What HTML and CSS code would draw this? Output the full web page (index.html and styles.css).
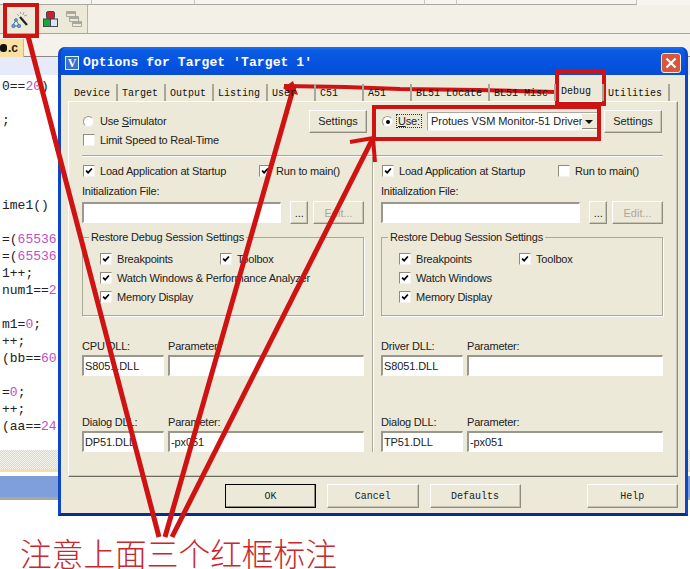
FILE: index.html
```html
<!DOCTYPE html>
<html lang="zh">
<head>
<meta charset="utf-8">
<title>Options for Target</title>
<link rel="stylesheet" href="styles.css">
</head>
<body>
<svg class="defs" width="0" height="0" aria-hidden="true">
  <symbol id="check" viewBox="0 0 12 12"><path d="M2.5 5.500 5 8l4.500-5" fill="none" stroke="#000" stroke-width="2"/></symbol>
</svg>
<div class="app">
  <div class="menu-strip">
    <span class="seg seg-a"></span><span class="seg seg-b"></span><span class="seg seg-c"></span><span class="seg seg-d"></span><span class="seg seg-e"></span>
  </div>
  <div class="toolbar-row">
    <div class="toolbar">
      <svg class="tool tool-wand" viewBox="0 0 18 18" width="18" height="18">
        <path d="M9 6l7 8" stroke="#222" stroke-width="2.200" fill="none"/>
        <path d="M9 1l1 2M13 1l-1 3M16 4l-3 1M6 3l2 2" stroke="#b9a" stroke-width="1" fill="none"/>
        <path d="M5 9 2 14M5 9l3 5M2 15h6" stroke="#4a7ab8" stroke-width="1" fill="none"/>
        <circle cx="5" cy="9" r="1.500" fill="#6c9ad0" stroke="#2d62a8" stroke-width=".6"/><circle cx="2.400" cy="15" r="1.700" fill="#6c9ad0" stroke="#2d62a8" stroke-width=".6"/><circle cx="8" cy="15" r="1.700" fill="#6c9ad0" stroke="#2d62a8" stroke-width=".6"/>
      </svg>
      <svg class="tool tool-boxes" viewBox="0 0 15 16" width="15" height="16">
        <rect x="3.500" y="0.500" width="8" height="7.500" rx="1.500" fill="#c8202c" stroke="#445"/>
        <rect x="0.500" y="8" width="7" height="7.500" fill="#19a838" stroke="#445"/>
        <rect x="7.500" y="8" width="7" height="7.500" fill="#d8e2f2" stroke="#445"/>
      </svg>
      <svg class="tool tool-windows" viewBox="0 0 16 16" width="16" height="16">
        <path d="M.5.5h9v5h-9zM3.500 5.500h9v5h-9zM6.500 10.500h9v5h-9z" fill="#ece9d8" stroke="#a8a8a0"/>
        <path d="M.5 2h9M3.500 7h9M6.500 12h9" stroke="#a8a8a0" stroke-width="2"/>
      </svg>
    </div>
  </div>
  <div class="file-row"><span class="file-tab"><b class="file-dot"></b>.c</span></div>
  <pre class="code"><span class="hl">0==<i>20</i>)</span>

;




ime1()

=(<i>65536</i>
=(<i>65536</i>
1++;
num1==<i>2</i>

m1=<i>0</i>;
++;
(bb==<i>60</i>

=<i>0</i>;
++;
(aa==<i>24</i></pre>
  <div class="hatch"></div>
  <div class="output-gap"></div>
  <div class="statusbar"></div>
  <p class="note">注意上面三个红框标注</p>
</div>

<section class="window">
  <header class="titlebar">
    <span class="app-icon">V</span>
    <h1 class="title">Options for Target 'Target 1'</h1>
    <span class="close"><svg viewBox="0 0 12 12" width="12" height="12"><path d="M1.500 1.500l9 9M10.500 1.500l-9 9" stroke="#fff" stroke-width="2.200"/></svg></span>
  </header>
  <div class="client">
    <nav class="tabs">
      <span class="tab">Device</span><span class="tab">Target</span><span class="tab">Output</span><span class="tab">Listing</span><span class="tab">User</span><span class="tab">C51</span><span class="tab">A51</span><span class="tab">BL51 Locate</span><span class="tab">BL51 Misc</span><span class="tab tab-active">Debug</span><span class="tab">Utilities</span>
    </nav>
    <div class="sheet">
      <div class="columns top">
        <div class="col">
          <div class="row between">
            <label class="opt"><span class="radio"></span><span>Use <u>S</u>imulator</span></label>
            <button class="btn btn-settings">Settings</button>
          </div>
          <label class="opt limit"><span class="cb"></span><span>Limit Speed to Real-Time</span></label>
        </div>
        <div class="col">
          <div class="row">
            <label class="opt opt-use"><span class="radio on"></span><span class="focus"><u>U</u>se:</span></label>
            <div class="combo"><span>Protues VSM Monitor-51 Driver</span><span class="combo-arrow"></span></div>
            <button class="btn btn-settings btn-driver">Settings</button>
          </div>
        </div>
      </div>
      <hr class="rule">
      <div class="columns panels">
        <div class="col col-left">
          <div class="load-row">
            <label class="opt"><span class="cb"><svg class="tick"><use href="#check"/></svg></span><span>Load Application at Startup</span></label>
            <label class="opt run"><span class="cb"><svg class="tick"><use href="#check"/></svg></span><span>Run to main()</span></label>
          </div>
          <div class="label init-label">Initialization File:</div>
          <div class="file-line">
            <span class="field field-init"></span>
            <button class="btn btn-dots">...</button>
            <button class="btn btn-edit" disabled>Edit...</button>
          </div>
          <fieldset class="group">
            <legend>Restore Debug Session Settings</legend>
            <div class="group-row">
              <label class="opt"><span class="cb"><svg class="tick"><use href="#check"/></svg></span><span>Breakpoints</span></label>
              <label class="opt toolbox"><span class="cb"><svg class="tick"><use href="#check"/></svg></span><span>Toolbox</span></label>
            </div>
            <label class="opt g2"><span class="cb"><svg class="tick"><use href="#check"/></svg></span><span>Watch Windows &amp; Performance Analyzer</span></label>
            <label class="opt g3"><span class="cb"><svg class="tick"><use href="#check"/></svg></span><span>Memory Display</span></label>
          </fieldset>
          <div class="dll dll-first">
            <div class="dll-name"><div class="label">CPU DLL:</div><span class="field">S8051.DLL</span></div>
            <div class="dll-param"><div class="label">Parameter:</div><span class="field"></span></div>
          </div>
          <div class="dll dll-second">
            <div class="dll-name"><div class="label">Dialog DLL:</div><span class="field">DP51.DLL</span></div>
            <div class="dll-param"><div class="label">Parameter:</div><span class="field">-px051</span></div>
          </div>
        </div>
        <div class="col">
          <div class="load-row">
            <label class="opt"><span class="cb"><svg class="tick"><use href="#check"/></svg></span><span>Load Application at Startup</span></label>
            <label class="opt run"><span class="cb"></span><span>Run to main()</span></label>
          </div>
          <div class="label init-label">Initialization File:</div>
          <div class="file-line">
            <span class="field field-init"></span>
            <button class="btn btn-dots">...</button>
            <button class="btn btn-edit" disabled>Edit...</button>
          </div>
          <fieldset class="group">
            <legend>Restore Debug Session Settings</legend>
            <div class="group-row">
              <label class="opt"><span class="cb"><svg class="tick"><use href="#check"/></svg></span><span>Breakpoints</span></label>
              <label class="opt toolbox"><span class="cb"><svg class="tick"><use href="#check"/></svg></span><span>Toolbox</span></label>
            </div>
            <label class="opt g2"><span class="cb"><svg class="tick"><use href="#check"/></svg></span><span>Watch Windows</span></label>
            <label class="opt g3"><span class="cb"><svg class="tick"><use href="#check"/></svg></span><span>Memory Display</span></label>
          </fieldset>
          <div class="dll dll-first">
            <div class="dll-name"><div class="label">Driver DLL:</div><span class="field">S8051.DLL</span></div>
            <div class="dll-param"><div class="label">Parameter:</div><span class="field"></span></div>
          </div>
          <div class="dll dll-second">
            <div class="dll-name"><div class="label">Dialog DLL:</div><span class="field">TP51.DLL</span></div>
            <div class="dll-param"><div class="label">Parameter:</div><span class="field">-px051</span></div>
          </div>
        </div>
      </div>
    </div>
    <footer class="actions">
      <button class="btn act act-default">OK</button>
      <button class="btn act">Cancel</button>
      <button class="btn act">Defaults</button>
      <button class="btn act act-help">Help</button>
    </footer>
  </div>
</section>

<svg class="marks" viewBox="0 0 690 569" width="690" height="569" aria-hidden="true">
  <g fill="none" stroke="#cf1212" stroke-linejoin="miter">
    <rect x="5" y="5" width="32" height="31" stroke-width="4"/>
    <rect x="557" y="72" width="47" height="32" stroke-width="4"/>
    <rect x="374" y="107" width="225" height="32" stroke-width="4"/>
    <path d="M28 36 159 537" stroke-width="5"/>
    <path d="M294 86 165 537" stroke-width="5"/>
    <path d="M372 140 172 537" stroke-width="5"/>
    <path d="M284 86 345 87 400 89 478 90 556 92" stroke-width="4"/>
    <path d="M350 142 373 138 375 162" stroke-width="4"/>
  </g>
  <path d="M293 81 283 88 288 92 298 95Z" fill="#cf1212"/>
</svg>
</body>
</html>
```
FILE: styles.css
```css
* { box-sizing: border-box; }
html, body { margin: 0; padding: 0; }
body { width: 690px; height: 569px; overflow: hidden; position: relative; background: #fff; font-family: "Liberation Sans", Arial, sans-serif; font-size: 11px; color: #222; }
.defs { position: absolute; }

/* background application */
.app { display: flex; flex-direction: column; height: 569px; }
.menu-strip { display: flex; height: 5px; background: #f6f4ee; }
.seg { display: block; height: 5px; border-bottom: 1px solid #a9a89e; border-right: 1px solid #c6c4b8; }
.seg-a { width: 92px; }
.seg-b { width: 103px; }
.seg-c { width: 230px; }
.seg-d { width: 32px; }
.seg-e { width: 180px; }
.toolbar-row { height: 29px; background: #f2f0e7; border-bottom: 1px solid #a8a79c; }
.toolbar { width: 88px; height: 28px; background: #ece9d8; border-right: 1px solid #b4b3a8; display: flex; align-items: flex-start; padding: 6px 0 0 11px; }
.tool { display: block; flex: none; }
.tool-boxes { margin-left: 14px; }
.tool-windows { margin-left: 8px; }
.file-row { height: 23px; background: #f4f2ea; padding-top: 5px; border-bottom: 1px solid #8a897f; }
.file-tab { display: flex; align-items: center; width: 24px; height: 18px; background: #fbe0a4; border-right: 1px solid #c9b98c; font: 700 12px "Liberation Sans", sans-serif; color: #222; }
.file-dot { display: block; width: 7px; height: 8px; background: #111; border-radius: 3px; margin-right: 1px; }
.code { margin: 0; height: 393px; padding: 21px 0 0 2px; background: linear-gradient(#e7eaf8 0 18px, #fff 18px); font: 13px/17px "Liberation Mono", monospace; color: #222; overflow: hidden; }
.code i { font-style: normal; color: #c04fc0; }
.hatch { height: 19px; background: repeating-conic-gradient(#d8d8cc 0 25%, #f4f4ec 0 50%) 0 0 / 2px 2px; }
.output-gap { height: 7px; background: #fff; border-top: 3px solid #f3dfa8; }
.statusbar { height: 24px; background: #7e9fdc; border-bottom: 3px solid #a9a89e; }
.note { margin: 36px 0 0; padding-left: 20px; font: 300 31.700px/32px "Noto Sans CJK SC", sans-serif; color: #c8282c; white-space: nowrap; }

/* dialog window */
.window { position: absolute; left: 58px; top: 47px; width: 630px; height: 469px; background: #0f50d8; border-radius: 7px 7px 0 0; border: solid #0d47c8; border-width: 0 3px 3px 3px; border-bottom-color: #0a2c8c; display: flex; flex-direction: column; }
.titlebar { height: 28px; display: flex; align-items: center; padding: 3px 4px 0 4px; background: linear-gradient(#1a72f0 0, #0a5ae4 4px, #0450dc 22px, #0a4ed0 100%); border-radius: 7px 7px 0 0; flex: none; color: #fff; }
.app-icon { width: 14px; height: 14px; background: #3b6fd0; border: 1px solid #cfe; color: #fff; font: 700 12px/12px "Liberation Serif", serif; text-align: center; flex: none; }
.title { flex: 1; margin: 0 0 0 4px; font: 700 13px/16px "Liberation Mono", monospace; letter-spacing: .1px; color: #fff; white-space: pre; }
.close { width: 20px; height: 20px; border: 1px solid #f0e8e0; border-radius: 3px; background: #d8563a; display: flex; align-items: center; justify-content: center; flex: none; }
.client { flex: 1; background: #ece9d8; padding: 9px 7px 0; display: flex; flex-direction: column; min-height: 0; }
.tabs { display: flex; height: 17px; padding-left: 2px; flex: none; position: relative; z-index: 1; }
.tab { min-width: 48px; height: 17px; padding: 3px 6px 0 4px; font: 10px/13px "Liberation Mono", monospace; color: #111; border-right: 2px solid #a9a79a; white-space: pre; }
.tab-active { padding: 1px 6px 0 5px; }
.sheet { height: 376px; border: 1px solid #fff; border-right-color: #8e8c80; border-bottom-color: #6e6d62; box-shadow: inset -1px -1px 0 #c8c5b4; padding: 0 14px 0 13px; flex: none; }
.columns { display: grid; grid-template-columns: 282px 282px; column-gap: 17px; }
.top { height: 53px; padding-top: 8px; }
.col { min-width: 0; }
.rule { height: 2px; margin: 0; border: 0; border-top: 1px solid #aca899; border-bottom: 1px solid #fff; }
.panels { height: 295px; position: relative; }
.panels::before { content: ""; position: absolute; left: 290px; top: 0; bottom: 0; width: 2px; background: linear-gradient(90deg, #aca899 50%, #fff 50%); }
.row { display: flex; align-items: center; height: 22px; }
.between { justify-content: space-between; margin-right: -3px; }
.opt { display: flex; align-items: center; gap: 5px; height: 14px; white-space: nowrap; letter-spacing: -.2px; }
.opt-use { width: 46px; flex: none; }
.radio { width: 11px; height: 11px; border-radius: 50%; background: #fff; border: 1px solid #9d9b8f; border-right-color: #eee; border-bottom-color: #eee; flex: none; position: relative; margin-left: 1px; margin-right: 1px; }
.radio.on::after { content: ""; position: absolute; left: 3px; top: 3px; width: 4px; height: 4px; border-radius: 50%; background: #000; }
.focus { outline: 1px dotted #333; padding: 0 1px; margin-left: -2px; }
.cb { width: 12px; height: 12px; background: #fff; border: 1px solid #8e8c80; border-right-color: #f4f2ea; border-bottom-color: #f4f2ea; flex: none; display: block; margin-left: 1px; }
.tick { display: block; width: 10px; height: 10px; }
.limit { margin-top: 1px; }
.btn { font: 11px "Liberation Sans", sans-serif; color: #222; background: #ece9d8; border: 1px solid #8e8c80; border-top-color: #fff; border-left-color: #fff; box-shadow: inset -1px -1px 0 #c8c5b4; padding: 0; }
.btn:disabled { color: #aca899; }
.btn-settings { width: 58px; height: 23px; flex: none; }
.btn-driver { margin-left: 5px; }
.combo { width: 172px; height: 19px; flex: none; background: #fff; border: 1px solid #aaa89c; border-right-color: #f4f2ea; border-bottom-color: #f4f2ea; display: flex; align-items: center; justify-content: space-between; padding-left: 3px; letter-spacing: -.05px; white-space: nowrap; overflow: hidden; }
.combo-arrow { width: 15px; height: 15px; background: #ece9d8; border-bottom: 1px solid #8e8c80; position: relative; flex: none; margin-right: 1px; }
.combo-arrow::after { content: ""; position: absolute; left: 3px; top: 6px; border: 4px solid transparent; border-top-color: #111; border-bottom: 0; }
.load-row { display: flex; padding-top: 7px; height: 24px; }
.run { position: absolute; margin-left: 176px; }
.label { height: 14px; line-height: 14px; white-space: nowrap; letter-spacing: -.2px; }
.init-label { margin-top: 3px; }
.file-line { display: flex; align-items: center; margin-top: 3px; }
.field { display: block; height: 21px; background: #fff; border: 1px solid #fff; border-top: 2px solid #9a988c; border-left: 2px solid #9a988c; padding-left: 1px; line-height: 19px; letter-spacing: -.1px; overflow: hidden; white-space: nowrap; }
.field-init { width: 200px; }
.btn-dots { width: 18px; height: 23px; margin-left: 9px; }
.btn-edit { width: 51px; height: 23px; margin-left: 5px; }
.group { margin: 6px 0 0; height: 86px; padding: 0 0 0 16px; border: 1px solid #aca899; box-shadow: 1px 1px 0 #fff; position: relative; }
.group legend { padding: 0 2px; margin-left: -10px; line-height: 14px; letter-spacing: -.2px; white-space: nowrap; }
.group-row { display: flex; margin-top: 8px; }
.toolbox { position: absolute; left: 136px; }
.g2 { margin-top: 5px; }
.g3 { margin-top: 5px; }
.dll { display: flex; gap: 4px; }
.dll-first { margin-top: 23px; }
.dll-second { margin-top: 39px; }
.dll-name { width: 82px; flex: none; }
.dll-param { flex: 1; }
.dll .label { margin-bottom: 2px; }
.actions { position: relative; height: 33px; display: flex; padding-top: 7px; padding-left: 157px; gap: 11px; flex: none; }
.act { width: 92px; height: 24px; font: 10px "Liberation Mono", monospace; }
.act-default { border: 1px solid #000; box-shadow: inset -1px -1px 0 #8e8c80; }
.act-help { margin-left: 55px; }

/* annotations */
.marks { position: absolute; left: 0; top: 0; pointer-events: none; }
```
